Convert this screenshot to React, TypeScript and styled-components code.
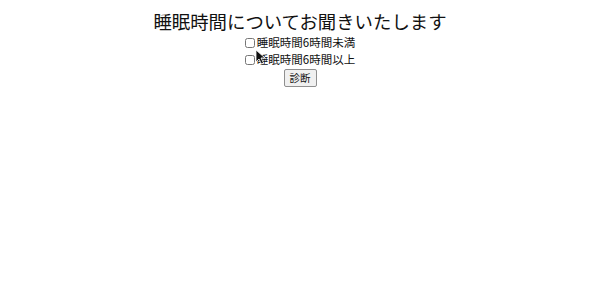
import React from "react";
import styled, { createGlobalStyle } from "styled-components";

const GlobalStyle = createGlobalStyle`
  html, body {
    margin: 0;
    padding: 0;
    background: #ffffff;
  }
  body {
    font-family: "Noto Sans CJK JP", "Noto Sans", sans-serif;
    color: #111;
  }
`;

const Page = styled.div`
  position: relative;
  width: 600px;
  height: 282px;
  display: flex;
  flex-direction: column;
  align-items: center;
  padding-top: 8px;
  box-sizing: border-box;
`;

const Title = styled.h1`
  margin: 0;
  font-size: 18.4px;
  font-weight: 400;
  line-height: 26px;
`;

const Option = styled.label`
  display: flex;
  align-items: center;
  font-size: 11.5px;
  line-height: 17px;
  height: 17px;
`;

const Box = styled.input`
  width: 10px;
  height: 10px;
  margin: 0 2px 0 0;
`;

const Submit = styled.button`
  margin-top: 1px;
  font-family: inherit;
  font-size: 10.5px;
  line-height: 14px;
  padding: 1px 5px;
  background: #f0f0f0;
  border: 1px solid #8f8f8f;
  border-radius: 2px;
  color: #111;
`;

const Cursor = styled.svg`
  position: absolute;
  left: 255px;
  top: 49px;
`;

export default function App() {
  return (
    <>
      <GlobalStyle />
      <Page>
        <Title>睡眠時間についてお聞きいたします</Title>
        <Option>
          <Box type="checkbox" />
          睡眠時間6時間未満
        </Option>
        <Option>
          <Box type="checkbox" />
          睡眠時間6時間以上
        </Option>
        <Submit type="button">診断</Submit>
        <Cursor width="11" height="16" viewBox="0 0 11 16">
          <path
            d="M1 1 L1 13 L4 10 L6.5 15 L8.5 14 L6 9 L10 9 Z"
            fill="#111"
            stroke="#fff"
            strokeWidth="0.8"
          />
        </Cursor>
      </Page>
    </>
  );
}
